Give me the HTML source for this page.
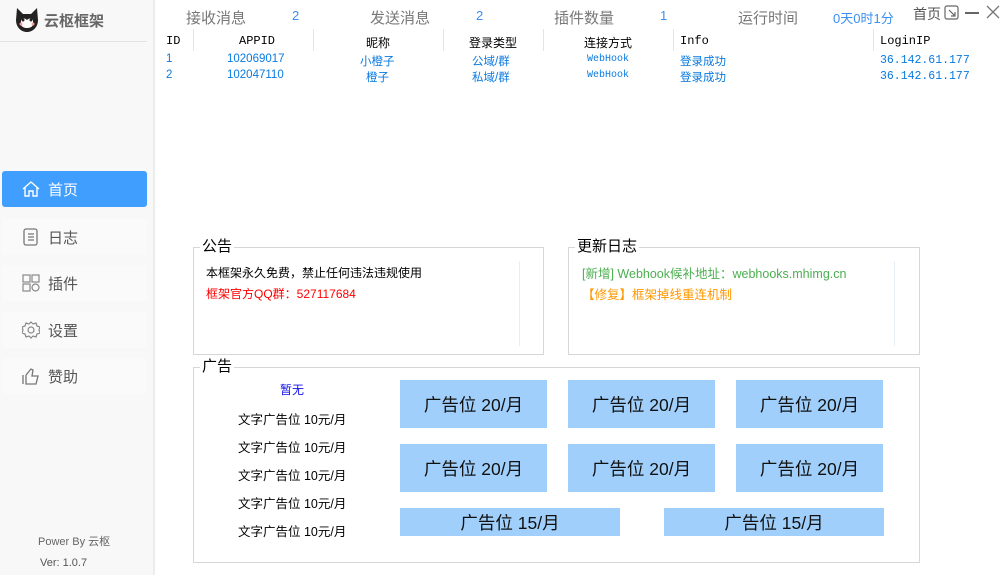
<!DOCTYPE html>
<html><head><meta charset="utf-8"><style>
*{margin:0;padding:0;box-sizing:border-box}
body{width:1001px;height:575px;position:relative;background:#fff;font-family:"Liberation Sans","Noto Sans CJK SC",sans-serif;overflow:hidden;color:#000}
.a{position:absolute;white-space:nowrap}
#side{position:absolute;left:0;top:0;width:155px;height:575px;background:#f8f8f8;border-right:2px solid #ececec}
.nav{position:absolute;left:2px;width:145px;height:36px;background:#fafafa;border-radius:3px;font-size:15px;color:#555}
.nav span{position:absolute;left:46px;top:8px}
.nav svg{position:absolute;left:20px;top:9px}
.th{font-family:"Liberation Mono","Noto Sans CJK SC",monospace;font-size:12px}
.td{font-size:11.5px;color:#0a7ae0}
.sep{position:absolute;top:29px;width:1px;height:22px;background:#e4e4e4}
.box{position:absolute;border:1px solid #d6d6d6}
.lg{position:absolute;top:-10px;left:6px;background:#fff;font-size:15px;padding:0 2px;line-height:18px}
.ad{position:absolute;background:#a0cffc;font-size:17.5px;text-align:center;color:#111;padding-top:2px}
.tx{position:absolute;left:238px;font-size:12.5px}
</style></head><body>
<div id="side">
<svg class="a" style="left:14px;top:6px" width="26" height="28" viewBox="0 0 26 28"><path d="M3 2l6 6h8l6-6 1 12c0 7-5 12-11 12S2 21 2 14z" fill="#222"/><path d="M7 14c2-2 4-2 6 0 2-2 4-2 6 0v5c-2 4-10 4-12 0z" fill="#fff"/><circle cx="9" cy="14" r="1.5" fill="#222"/><circle cx="17" cy="14" r="1.5" fill="#222"/><circle cx="7" cy="18" r="1.5" fill="#f4a0a0"/><circle cx="19" cy="18" r="1.5" fill="#f4a0a0"/></svg>
<div class="a" style="left:44px;top:10px;font-size:15px;font-weight:bold;color:#666">云枢框架</div>
<div class="a" style="left:0;top:41px;width:147px;height:1px;background:#e2e2e2"></div>
<div class="nav" style="top:171px;background:#409eff;color:#fff"><svg width="18" height="18" viewBox="0 0 18 18" fill="none" stroke="#fff" stroke-width="1.4"><path d="M1 9L9 2l8 7M3 7v9h4v-5h4v5h4V7"/></svg><span>首页</span></div>
<div class="nav" style="top:219px"><svg width="18" height="18" viewBox="0 0 18 18" fill="none" stroke="#777" stroke-width="1.3"><rect x="2" y="1" width="13" height="16" rx="2"/><path d="M6 6h6M6 9h6M6 12h6"/></svg><span>日志</span></div>
<div class="nav" style="top:265px"><svg width="18" height="18" viewBox="0 0 18 18" fill="none" stroke="#888" stroke-width="1.2"><rect x="1" y="1" width="7" height="7"/><rect x="10" y="1" width="7" height="7"/><rect x="1" y="10" width="7" height="7"/><circle cx="13.5" cy="13.5" r="3.5"/></svg><span>插件</span></div>
<div class="nav" style="top:312px"><svg width="18" height="18" viewBox="0 0 18 18" fill="none" stroke="#888" stroke-width="1.2"><path d="M9 1l2 2 3-1 1 3 3 1-1 3 1 3-3 1-1 3-3-1-2 2-2-2-3 1-1-3-3-1 1-3-1-3 3-1 1-3 3 1z"/><circle cx="9" cy="9" r="3"/></svg><span>设置</span></div>
<div class="nav" style="top:358px"><svg width="18" height="18" viewBox="0 0 18 18" fill="none" stroke="#777" stroke-width="1.3"><path d="M1 8v9M4 8v9h10l2-8h-6l1-6-2-1-5 6"/></svg><span>赞助</span></div>
<div class="a" style="left:38px;top:533px;font-size:11px;color:#666">Power By 云枢</div>
<div class="a" style="left:40px;top:557px;font-size:11px;color:#555">Ver: 1.0.7</div>
</div>
<div class="a" style="left:186px;top:7px;font-size:15px;color:#777">接收消息</div>
<div class="a" style="left:292px;top:8px;font-size:13px;color:#3b8fef">2</div>
<div class="a" style="left:370px;top:7px;font-size:15px;color:#777">发送消息</div>
<div class="a" style="left:476px;top:8px;font-size:13px;color:#3b8fef">2</div>
<div class="a" style="left:554px;top:7px;font-size:15px;color:#777">插件数量</div>
<div class="a" style="left:660px;top:8px;font-size:13px;color:#3b8fef">1</div>
<div class="a" style="left:738px;top:7px;font-size:15px;color:#777">运行时间</div>
<div class="a" style="left:833px;top:8px;font-size:13px;color:#3b8fef">0天0时1分</div>
<div class="a" style="left:913px;top:4px;font-size:14px;color:#555">首页</div>
<svg class="a" style="left:944px;top:5px" width="15" height="15" viewBox="0 0 15 15" fill="none" stroke="#666" stroke-width="1.2"><rect x="1" y="1" width="13" height="13" rx="2"/><path d="M5 5l6 6M7 11h4V7"/></svg>
<div class="a" style="left:965px;top:12px;width:14px;height:1.5px;background:#666"></div>
<svg class="a" style="left:986px;top:5px" width="14" height="14" viewBox="0 0 14 14" stroke="#777" stroke-width="1.3"><path d="M1 1l12 12M13 1L1 13"/></svg>
<div class="sep" style="left:193px"></div><div class="sep" style="left:313px"></div><div class="sep" style="left:443px"></div><div class="sep" style="left:543px"></div><div class="sep" style="left:673px"></div><div class="sep" style="left:873px"></div>
<div class="a th" style="left:166px;top:34px">ID</div>
<div class="a th" style="left:239px;top:34px">APPID</div>
<div class="a th" style="left:366px;top:34px">昵称</div>
<div class="a th" style="left:469px;top:34px">登录类型</div>
<div class="a th" style="left:584px;top:34px">连接方式</div>
<div class="a th" style="left:680px;top:34px">Info</div>
<div class="a th" style="left:880px;top:34px">LoginIP</div>
<div class="a td" style="left:166px;top:53px">1</div><div class="a td" style="left:166px;top:69px">2</div>
<div class="a td" style="left:227px;top:53px">102069017</div><div class="a td" style="left:227px;top:69px">102047110</div>
<div class="a td" style="left:360px;top:53px">小橙子</div><div class="a td" style="left:366px;top:69px">橙子</div>
<div class="a td" style="left:472px;top:53px">公域/群</div><div class="a td" style="left:472px;top:69px">私域/群</div>
<div class="a td" style="left:587px;top:54px;font-size:10px;font-family:'Liberation Mono',monospace">WebHook</div><div class="a td" style="left:587px;top:70px;font-size:10px;font-family:'Liberation Mono',monospace">WebHook</div>
<div class="a td" style="left:680px;top:53px">登录成功</div><div class="a td" style="left:680px;top:69px">登录成功</div>
<div class="a td" style="left:880px;top:54px;font-family:'Liberation Mono',monospace;font-size:11.5px">36.142.61.177</div><div class="a td" style="left:880px;top:70px;font-family:'Liberation Mono',monospace;font-size:11.5px">36.142.61.177</div>

<div class="box" style="left:193px;top:247px;width:351px;height:108px"><div class="lg">公告</div>
<div class="a" style="left:12px;top:16px;font-size:12px">本框架永久免费，禁止任何违法违规使用</div>
<div class="a" style="left:12px;top:37px;font-size:12px;color:#f00">框架官方QQ群：527117684</div>
<div class="a" style="left:325px;top:13px;width:1px;height:85px;background:#e8eef8"></div></div>
<div class="box" style="left:568px;top:247px;width:352px;height:108px"><div class="lg">更新日志</div>
<div class="a" style="left:13px;top:15px;font-size:12.5px;color:#4caf50">[新增] Webhook候补地址：webhooks.mhimg.cn</div>
<div class="a" style="left:13px;top:36px;font-size:12.5px;color:#ff9800">【修复】框架掉线重连机制</div>
<div class="a" style="left:325px;top:13px;width:1px;height:85px;background:#e8eef8"></div></div>
<div class="box" style="left:193px;top:367px;width:727px;height:196px"><div class="lg">广告</div></div>
<div class="a" style="left:280px;top:381px;font-size:12px;color:#1010ee">暂无</div>
<div class="tx" style="top:409px">文字广告位 10元/月</div>
<div class="tx" style="top:437px">文字广告位 10元/月</div>
<div class="tx" style="top:465px">文字广告位 10元/月</div>
<div class="tx" style="top:493px">文字广告位 10元/月</div>
<div class="tx" style="top:521px">文字广告位 10元/月</div>
<div class="ad" style="left:400px;top:380px;width:147px;height:48px;line-height:46px">广告位 20/月</div>
<div class="ad" style="left:568px;top:380px;width:147px;height:48px;line-height:46px">广告位 20/月</div>
<div class="ad" style="left:736px;top:380px;width:147px;height:48px;line-height:46px">广告位 20/月</div>
<div class="ad" style="left:400px;top:444px;width:147px;height:48px;line-height:46px">广告位 20/月</div>
<div class="ad" style="left:568px;top:444px;width:147px;height:48px;line-height:46px">广告位 20/月</div>
<div class="ad" style="left:736px;top:444px;width:147px;height:48px;line-height:46px">广告位 20/月</div>
<div class="ad" style="left:400px;top:508px;width:220px;height:28px;line-height:26px">广告位 15/月</div>
<div class="ad" style="left:664px;top:508px;width:220px;height:28px;line-height:26px">广告位 15/月</div>
</body></html>
